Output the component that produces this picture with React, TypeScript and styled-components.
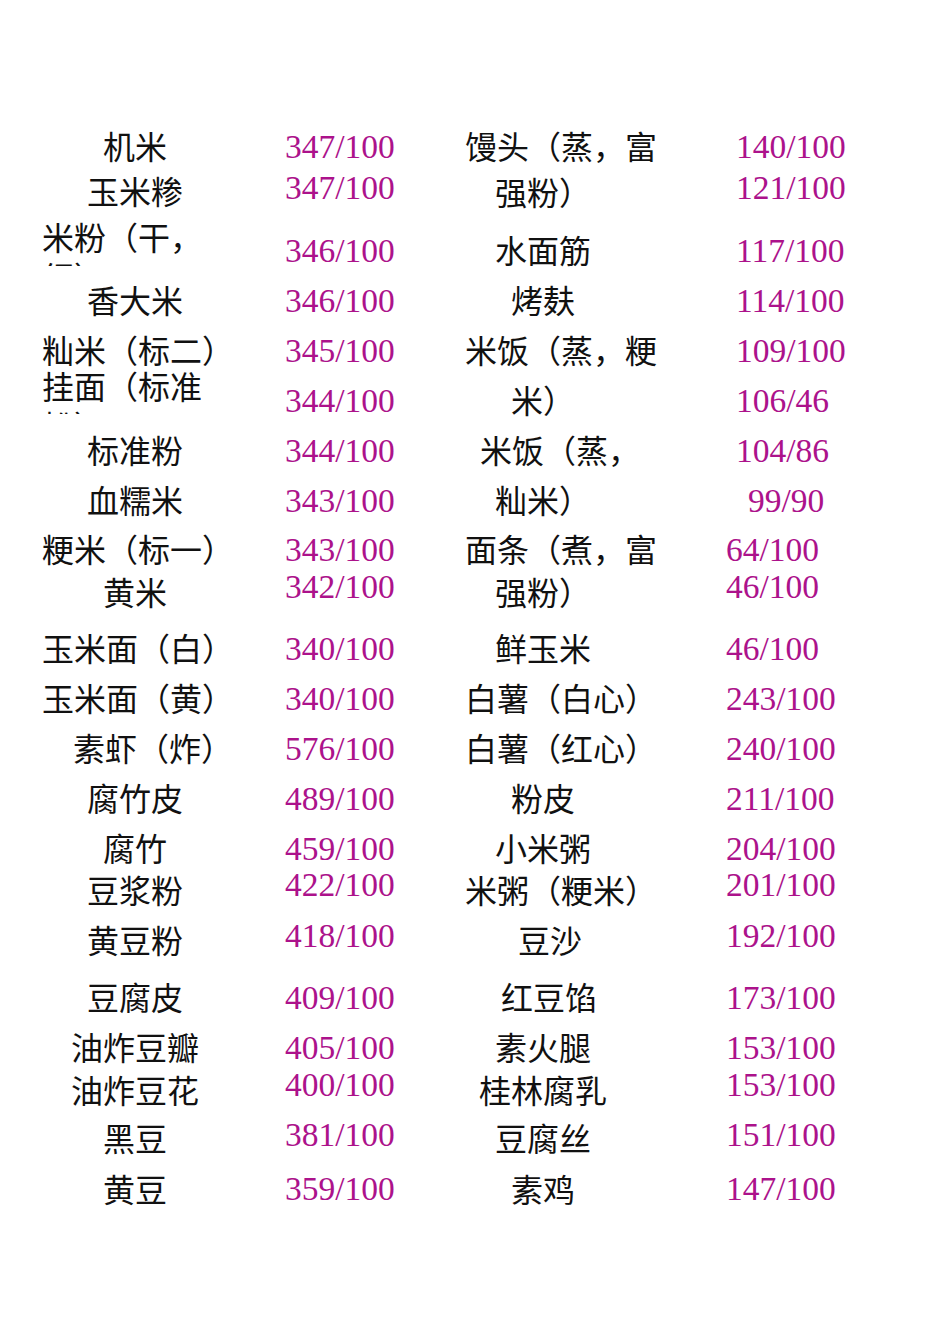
import React from 'react';
import styled, { createGlobalStyle } from 'styled-components';

const GlobalStyle = createGlobalStyle`
  html, body {
    margin: 0;
    padding: 0;
    background: #ffffff;
  }
`;

type NameCell = { text: string; dy?: number; dx?: number; lines?: string[]; shift?: number; clip?: number };
type NumCell = { text: string; dy?: number; indent?: number };
type Row = { c: number; left: NameCell; leftNum: NumCell; right: NameCell; rightNum: NumCell };

// c = vertical centre of the row text on the page
const rows: Row[] = [
  { c: 147, left: { text: '机米' }, leftNum: { text: '347/100' }, right: { text: '馒头（蒸，富' }, rightNum: { text: '140/100', indent: 115 } },
  { c: 190, left: { text: '玉米糁', dy: 2 }, leftNum: { text: '347/100', dy: -2 }, right: { text: '强粉）', dy: 3 }, rightNum: { text: '121/100', dy: -2, indent: 115 } },
  { c: 251, left: { text: '', lines: ['米粉（干，', '细）'], shift: -10, clip: 50 }, leftNum: { text: '346/100' }, right: { text: '水面筋' }, rightNum: { text: '117/100', indent: 115 } },
  { c: 301, left: { text: '香大米' }, leftNum: { text: '346/100' }, right: { text: '烤麸' }, rightNum: { text: '114/100', indent: 115 } },
  { c: 351, left: { text: '籼米（标二）' }, leftNum: { text: '345/100' }, right: { text: '米饭（蒸，粳' }, rightNum: { text: '109/100', indent: 115 } },
  { c: 401, left: { text: '', lines: ['挂面（标准', '粉）'], shift: -11, clip: 49 }, leftNum: { text: '344/100' }, right: { text: '米）' }, rightNum: { text: '106/46', indent: 115 } },
  { c: 451, left: { text: '标准粉' }, leftNum: { text: '344/100' }, right: { text: '米饭（蒸，', dx: 15 }, rightNum: { text: '104/86', indent: 115 } },
  { c: 501, left: { text: '血糯米' }, leftNum: { text: '343/100' }, right: { text: '籼米）' }, rightNum: { text: '99/90', indent: 127 } },
  { c: 550, left: { text: '粳米（标一）' }, leftNum: { text: '343/100' }, right: { text: '面条（煮，富' }, rightNum: { text: '64/100' } },
  { c: 590, left: { text: '黄米', dy: 3 }, leftNum: { text: '342/100', dy: -3 }, right: { text: '强粉）', dy: 3 }, rightNum: { text: '46/100', dy: -3 } },
  { c: 649, left: { text: '玉米面（白）' }, leftNum: { text: '340/100' }, right: { text: '鲜玉米' }, rightNum: { text: '46/100' } },
  { c: 699, left: { text: '玉米面（黄）' }, leftNum: { text: '340/100' }, right: { text: '白薯（白心）' }, rightNum: { text: '243/100' } },
  { c: 749, left: { text: '素虾（炸）', dx: 31 }, leftNum: { text: '576/100' }, right: { text: '白薯（红心）' }, rightNum: { text: '240/100' } },
  { c: 799, left: { text: '腐竹皮' }, leftNum: { text: '489/100' }, right: { text: '粉皮' }, rightNum: { text: '211/100' } },
  { c: 849, left: { text: '腐竹' }, leftNum: { text: '459/100' }, right: { text: '小米粥' }, rightNum: { text: '204/100' } },
  { c: 888, left: { text: '豆浆粉', dy: 3 }, leftNum: { text: '422/100', dy: -3 }, right: { text: '米粥（粳米）', dy: 3 }, rightNum: { text: '201/100', dy: -3 } },
  { c: 938, left: { text: '黄豆粉', dy: 3 }, leftNum: { text: '418/100', dy: -2 }, right: { text: '豆沙', dy: 3, dx: 14 }, rightNum: { text: '192/100', dy: -2 } },
  { c: 998, left: { text: '豆腐皮' }, leftNum: { text: '409/100' }, right: { text: '红豆馅', dx: 12 }, rightNum: { text: '173/100' } },
  { c: 1048, left: { text: '油炸豆瓣' }, leftNum: { text: '405/100' }, right: { text: '素火腿' }, rightNum: { text: '153/100' } },
  { c: 1088, left: { text: '油炸豆花', dy: 3 }, leftNum: { text: '400/100', dy: -3 }, right: { text: '桂林腐乳', dy: 3 }, rightNum: { text: '153/100', dy: -3 } },
  { c: 1137, left: { text: '黑豆', dy: 2 }, leftNum: { text: '381/100', dy: -2 }, right: { text: '豆腐丝', dy: 2 }, rightNum: { text: '151/100', dy: -2 } },
  { c: 1190, left: { text: '黄豆' }, leftNum: { text: '359/100', dy: -1 }, right: { text: '素鸡' }, rightNum: { text: '147/100', dy: -1 } },
];

const ROW_LEAD = 25;

const Page = styled.div`
  width: 950px;
  min-height: 1344px;
  box-sizing: border-box;
  padding: ${147 - ROW_LEAD}px 0 0 42px;
  background: #ffffff;
`;

const Sheet = styled.div`
  display: flex;
  flex-direction: column;
`;

const SheetRow = styled.div<{ $h: number }>`
  display: grid;
  grid-template-columns: 186px 237px 156px 1fr;
  align-items: start;
  height: ${(p) => p.$h}px;
`;

const Name = styled.div<{ $dy: number; $dx: number }>`
  padding-top: ${(p) => 5 + p.$dy}px;
  padding-left: ${(p) => p.$dx}px;
  font-family: "Noto Sans CJK SC", "Noto Sans", sans-serif;
  font-size: 32px;
  line-height: 36px;
  color: #111111;
  text-align: center;
  white-space: nowrap;
`;

const WrappedName = styled.div<{ $shift: number; $clip: number }>`
  margin-top: ${(p) => p.$shift}px;
  height: ${(p) => p.$clip}px;
  overflow: hidden;
  font-family: "Noto Sans CJK SC", "Noto Sans", sans-serif;
  font-size: 32px;
  line-height: 40px;
  color: #111111;
  text-align: left;
  white-space: nowrap;
`;

const Num = styled.div<{ $dy: number; $indent: number }>`
  padding-top: ${(p) => 7 + p.$dy}px;
  padding-left: ${(p) => p.$indent}px;
  font-family: "Liberation Serif", "Times New Roman", serif;
  font-size: 33.5px;
  line-height: 36px;
  color: #ac128b;
  white-space: nowrap;
`;

const NameView = ({ cell }: { cell: NameCell }) =>
  cell.lines ? (
    <WrappedName $shift={cell.shift ?? 0} $clip={cell.clip ?? 40}>
      {cell.lines.map((l) => (
        <div key={l}>{l}</div>
      ))}
    </WrappedName>
  ) : (
    <Name $dy={cell.dy ?? 0} $dx={cell.dx ?? 0}>
      {cell.text}
    </Name>
  );

const NumView = ({ cell, indent }: { cell: NumCell; indent: number }) => (
  <Num $dy={cell.dy ?? 0} $indent={cell.indent ?? indent}>
    {cell.text}
  </Num>
);

export default function App() {
  return (
    <>
      <GlobalStyle />
      <Page>
        <Sheet>
          {rows.map((row, i) => {
            const next = rows[i + 1];
            const h = next ? next.c - row.c : 60;
            return (
              <SheetRow key={row.c} $h={h}>
                <NameView cell={row.left} />
                <NumView cell={row.leftNum} indent={57} />
                <NameView cell={row.right} />
                <NumView cell={row.rightNum} indent={105} />
              </SheetRow>
            );
          })}
        </Sheet>
      </Page>
    </>
  );
}
